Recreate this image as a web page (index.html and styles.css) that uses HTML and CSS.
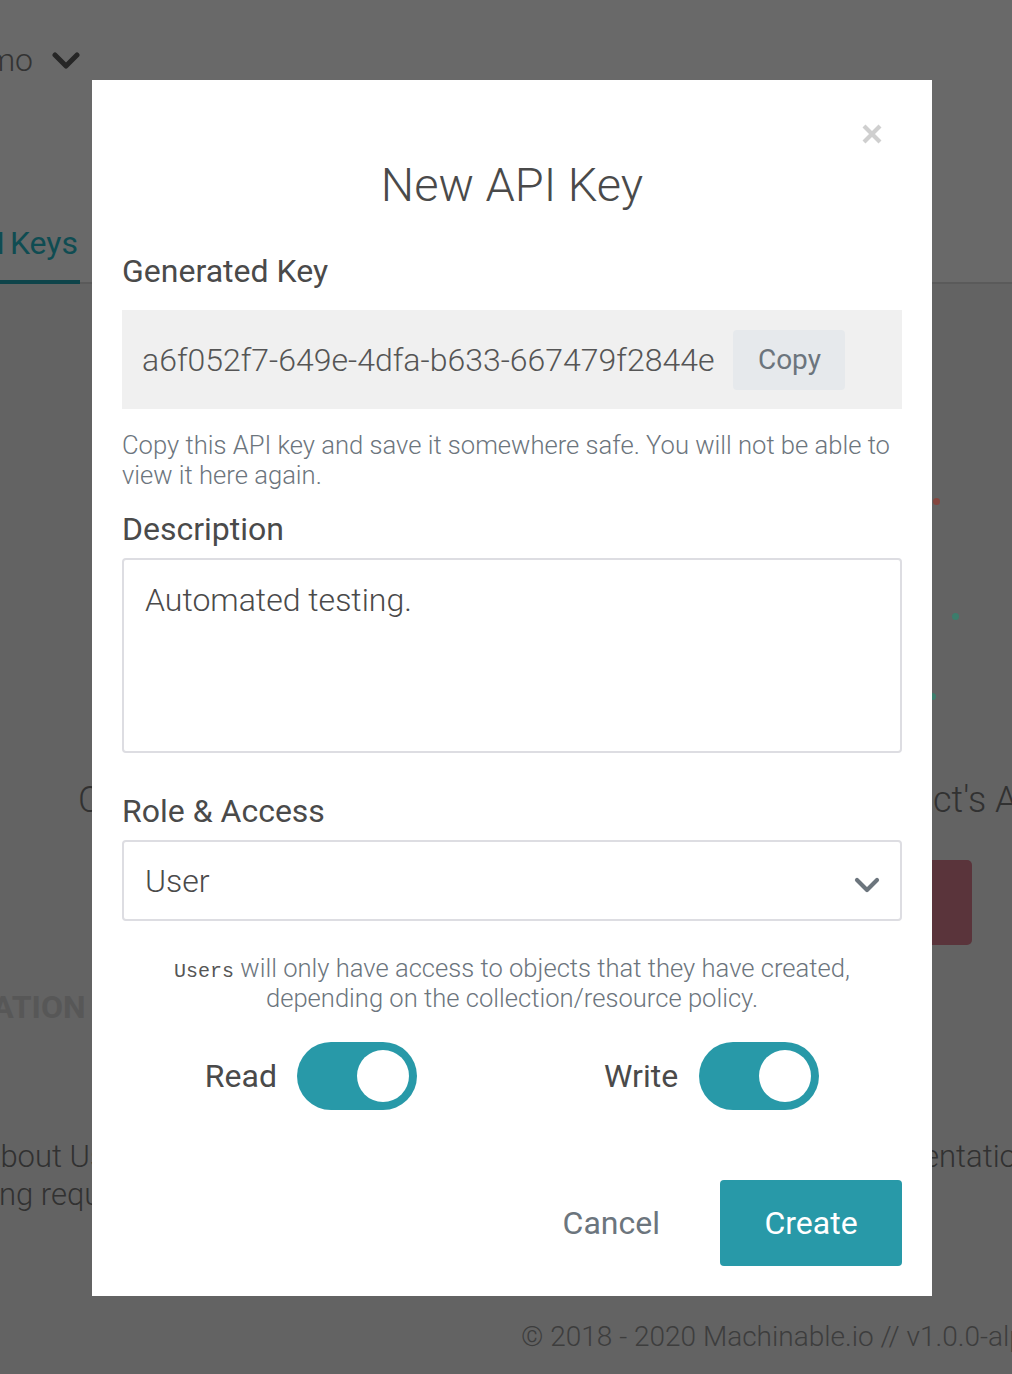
FILE: index.html
```html
<!DOCTYPE html>
<html lang="en">
<head>
<meta charset="utf-8">
<title>New API Key</title>
<link rel="stylesheet" href="styles.css">
</head>
<body>
<div class="page">
  <header class="topbar">
    <div class="brand">
      <div class="brand-name"><span>Demo</span></div>
      <svg class="brand-chevron" width="28" height="18" viewBox="0 0 28 18"><polyline points="3,3 14,14 25,3" fill="none" stroke="#262626" stroke-width="5" stroke-linecap="round" stroke-linejoin="round"/></svg>
    </div>
    <nav class="tabs">
      <div class="tab"><span>API Keys</span></div>
    </nav>
  </header>
  <main class="content">
    <div class="col col-left">
      <div class="frag heading-frag left-heading">Create a new key</div>
      <div class="frag caps-frag">DOCUMENTATION</div>
      <div class="frag para-frag">
        <span class="shift-a">About Users and API keys</span>
        <span class="shift-i">ing requests with keys</span>
      </div>
    </div>
    <div class="col col-center"></div>
    <div class="col col-right">
      <span class="dot dot-red"></span>
      <span class="dot dot-green dot-1"></span>
      <span class="dot dot-green dot-2"></span>
      <div class="frag heading-frag right-heading">ct's API</div>
      <div class="danger-btn"></div>
      <div class="frag para-frag right-para">entation</div>
    </div>
  </main>
  <footer class="footer">© 2018 - 2020 Machinable.io // v1.0.0-alpha</footer>
</div>

<div class="modal">
  <button class="close" aria-label="Close">
    <svg width="20" height="20" viewBox="0 0 20 20"><path d="M2 2 L18 18 M18 2 L2 18" stroke="#cfcfcf" stroke-width="4.2" fill="none"/></svg>
  </button>
  <h2 class="title">New API Key</h2>
  <div class="label label-first">Generated Key</div>
  <div class="keybox">
    <span class="key">a6f052f7-649e-4dfa-b633-667479f2844e</span>
    <button class="copy">Copy</button>
  </div>
  <p class="hint">Copy this API key and save it somewhere safe. You will not be able to view it here again.</p>
  <div class="label">Description</div>
  <div class="textarea">Automated testing.</div>
  <div class="label label-role">Role &amp; Access</div>
  <div class="select">
    <span>User</span>
    <svg width="26" height="17" viewBox="0 0 26 17"><polyline points="3,3 13,13 23,3" fill="none" stroke="#6c757d" stroke-width="4.2" stroke-linecap="round" stroke-linejoin="round"/></svg>
  </div>
  <p class="hint hint-center"><code>Users</code> will only have access to objects that they have created, depending on the collection/resource policy.</p>
  <div class="toggles">
    <div class="toggle-group">
      <span class="toggle-label">Read</span>
      <span class="switch"><span class="knob"></span></span>
    </div>
    <div class="toggle-group">
      <span class="toggle-label">Write</span>
      <span class="switch"><span class="knob"></span></span>
    </div>
  </div>
  <div class="actions">
    <button class="btn-cancel">Cancel</button>
    <button class="btn-create">Create</button>
  </div>
</div>
</body>
</html>
```

FILE: styles.css
```css
* { box-sizing: border-box; }

html, body {
  margin: 0;
  padding: 0;
}

body {
  width: 1012px;
  height: 1374px;
  overflow: hidden;
  position: relative;
  font-family: Roboto, "Liberation Sans", sans-serif;
  background: #636363;
}

.page {
  width: 1012px;
  height: 1374px;
  overflow: hidden;
  display: flex;
  flex-direction: column;
}

/* ---------- dimmed background page ---------- */
.topbar {
  height: 284px;
  background: #696969;
  border-bottom: 2px solid #5a5a5a;
  display: flex;
  flex-direction: column;
  flex: none;
}

.brand {
  display: flex;
  align-items: center;
  height: 40px;
  margin-top: 40px;
}

.brand-name {
  width: 33px;
  display: flex;
  justify-content: flex-end;
  font-family: "Roboto Light", Roboto, sans-serif;
  font-size: 32px;
  font-weight: 300;
  line-height: 40px;
  color: #333333;
  white-space: nowrap;
}

.brand-chevron {
  margin-left: 19px;
  margin-top: 2px;
}

.tabs {
  margin-top: auto;
  margin-bottom: -2px;
  display: flex;
}

.tab {
  width: 80px;
  display: flex;
  justify-content: flex-end;
  font-size: 32px;
  line-height: 40px;
  color: #0f4c52;
  white-space: nowrap;
  word-spacing: -3px;
  padding-bottom: 17px;
  border-bottom: 4px solid #0e444a;
}

.tab span { padding-right: 2px; }

.content {
  display: grid;
  grid-template-columns: 92px 840px 80px;
  height: 1030px;
  flex: none;
}

.col {
  display: flex;
  flex-direction: column;
  white-space: nowrap;
  min-width: 0;
}

.frag {
  color: #313131;
  font-family: "Roboto Light", Roboto, sans-serif;
  font-weight: 300;
}

.heading-frag {
  font-size: 36px;
  line-height: 44px;
  height: 44px;
}

.left-heading {
  margin-top: 494px;
  padding-left: 78px;
}

.caps-frag {
  margin-top: 167px;
  font-family: Roboto, sans-serif;
  font-size: 32px;
  line-height: 36px;
  font-weight: 700;
  color: #575757;
  margin-left: -179px;
}

.para-frag {
  font-size: 31px;
  line-height: 38px;
}

.col-left .para-frag {
  margin-top: 113px;
  display: flex;
  flex-direction: column;
}

.shift-a { margin-left: -19px; }
.shift-i { margin-left: -8px; }

.dot {
  display: block;
  width: 7px;
  height: 7px;
  border-radius: 50%;
}

.dot-red {
  background: #84463f;
  margin-top: 214px;
  margin-left: 1px;
}

.dot-green { background: #3c7d6c; }

.dot-1 {
  margin-top: 108px;
  margin-left: 20px;
}

.dot-2 {
  margin-top: 73px;
  margin-left: -3px;
}

.right-heading {
  margin-top: 78px;
  padding-left: 1px;
}

.danger-btn {
  margin-top: 38px;
  margin-left: -60px;
  width: 100px;
  height: 85px;
  border-radius: 5px;
  background: #5a343b;
}

.right-para {
  margin-top: 193px;
  margin-left: -9px;
}

.footer {
  padding-left: 521px;
  font-family: "Roboto Light", Roboto, sans-serif;
  font-size: 28px;
  font-weight: 300;
  line-height: 46px;
  color: #3d3d3d;
  white-space: nowrap;
}

/* ---------- modal ---------- */
.modal {
  position: absolute;
  left: 92px;
  top: 80px;
  width: 840px;
  background: #ffffff;
  padding: 78px 30px 30px;
  display: flex;
  flex-direction: column;
  color: #4a4a4a;
}

.close {
  position: absolute;
  top: 44px;
  right: 50px;
  width: 20px;
  height: 20px;
  padding: 0;
  border: 0;
  background: none;
  display: block;
}

.close svg { display: block; }

.title {
  margin: 0;
  font-family: "Roboto Light", Roboto, sans-serif;
  font-size: 47px;
  font-weight: 300;
  line-height: 54px;
  text-align: center;
  color: #4a4a4a;
}

.label {
  font-size: 32px;
  font-weight: 400;
  line-height: 38px;
  color: #4a4a4a;
  margin-top: 20px;
}

.label-first { margin-top: 40px; }
.label-role { margin-top: 39px; }

.keybox {
  margin-top: 20px;
  height: 99px;
  background: #f0f0f0;
  display: flex;
  align-items: center;
  padding-left: 20px;
}

.key {
  font-family: "Roboto Light", Roboto, sans-serif;
  font-size: 32px;
  font-weight: 300;
  color: #555555;
  white-space: nowrap;
}

.copy {
  margin-left: 19px;
  width: 112px;
  height: 60px;
  border: 0;
  border-radius: 4px;
  background: #e6e9ec;
  font-family: Roboto, "Liberation Sans", sans-serif;
  font-size: 28px;
  font-weight: 400;
  color: #6c757d;
  padding: 0;
}

.hint {
  margin: 21px 0 0;
  font-family: "Roboto Light", Roboto, sans-serif;
  font-size: 25.6px;
  font-weight: 300;
  line-height: 30px;
  color: #6c757d;
}

.textarea {
  margin-top: 10px;
  height: 195px;
  border: 2px solid #dddde2;
  border-radius: 4px;
  padding: 16px 21px;
  font-family: "Roboto Light", Roboto, sans-serif;
  font-size: 32px;
  font-weight: 300;
  line-height: 48px;
  color: #4a4a4a;
}

.select {
  margin-top: 10px;
  height: 81px;
  border: 2px solid #dddde2;
  border-radius: 4px;
  padding: 0 20px 0 21px;
  display: flex;
  align-items: center;
  justify-content: space-between;
  font-family: "Roboto Light", Roboto, sans-serif;
  font-size: 32px;
  font-weight: 300;
  color: #4a4a4a;
}

.select svg { margin-top: 10px; }

.hint-center {
  margin-top: 32px;
  text-align: center;
  padding: 0 40px;
}

.hint-center code {
  font-family: "Liberation Mono", "DejaVu Sans Mono", monospace;
  font-size: 20px;
  line-height: 1;
  color: #555555;
}

.toggles {
  margin-top: 29px;
  height: 68px;
  display: flex;
  justify-content: center;
  gap: 187px;
  padding-left: 0;
}

.toggle-group {
  display: flex;
  align-items: center;
  gap: 21px;
}

.toggle-group:first-child { gap: 20px; }

.toggle-label {
  font-size: 32px;
  font-weight: 400;
  color: #4a4a4a;
}

.switch {
  position: relative;
  width: 120px;
  height: 68px;
  border-radius: 34px;
  background: #2899a8;
  display: block;
}

.knob {
  position: absolute;
  top: 8px;
  right: 8px;
  width: 52px;
  height: 52px;
  border-radius: 50%;
  background: #ffffff;
}

.actions {
  margin-top: 70px;
  display: flex;
  justify-content: flex-end;
  align-items: center;
  gap: 60px;
}

.btn-cancel {
  border: 0;
  background: none;
  padding: 0;
  font-family: Roboto, "Liberation Sans", sans-serif;
  font-size: 32px;
  font-weight: 400;
  color: #6c757d;
}

.btn-create {
  width: 182px;
  height: 86px;
  border: 0;
  border-radius: 4px;
  background: #2899a8;
  font-family: Roboto, "Liberation Sans", sans-serif;
  font-size: 32px;
  font-weight: 400;
  color: #ffffff;
  padding: 0;
}
```
